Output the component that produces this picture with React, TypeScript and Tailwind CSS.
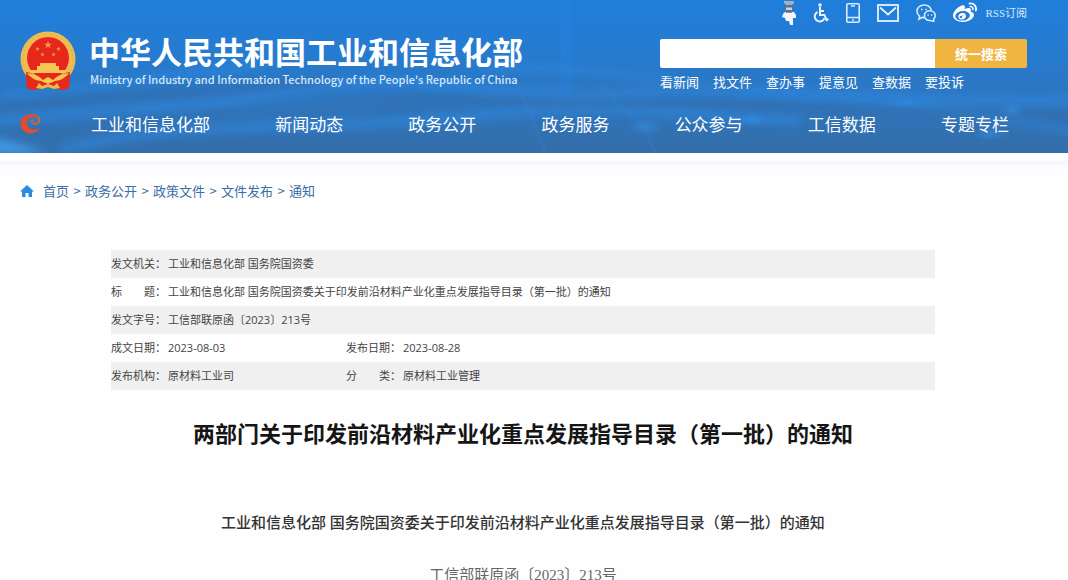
import React from 'react';
import { FaWeibo } from 'react-icons/fa';

const navItems = ['工业和信息化部', '新闻动态', '政务公开', '政务服务', '公众参与', '工信数据', '专题专栏'];
const quickLinks = ['看新闻', '找文件', '查办事', '提意见', '查数据', '要投诉'];
const crumbs = ['首页', '政务公开', '政策文件', '文件发布', '通知'];

const infoRows: string[][] = [
  ['发文机关：', '工业和信息化部 国务院国资委'],
  ['标　　题：', '工业和信息化部 国务院国资委关于印发前沿材料产业化重点发展指导目录（第一批）的通知'],
  ['发文字号：', '工信部联原函〔2023〕213号'],
  ['成文日期：', '2023-08-03', '发布日期：', '2023-08-28'],
  ['发布机构：', '原材料工业司', '分　　类：', '原材料工业管理'],
];

const HeaderBackdrop: React.FC = () => (
  <svg className="absolute inset-0 w-full h-full" viewBox="0 0 1068 153" preserveAspectRatio="none" aria-hidden="true">
    <defs>
      <linearGradient id="sky" x1="0" y1="0" x2="0" y2="1">
        <stop offset="0" stopColor="#1f7edb" />
        <stop offset="0.35" stopColor="#267bd0" />
        <stop offset="0.7" stopColor="#2f74bb" />
        <stop offset="1" stopColor="#346da9" />
      </linearGradient>
      <filter id="soft" x="-20%" y="-50%" width="140%" height="200%">
        <feGaussianBlur stdDeviation="4" />
      </filter>
      <radialGradient id="spark">
        <stop offset="0" stopColor="#2f8fe4" stopOpacity="0.6" />
        <stop offset="1" stopColor="#2f8fe4" stopOpacity="0" />
      </radialGradient>
    </defs>
    <rect width="1068" height="153" fill="url(#sky)" />
    <g filter="url(#soft)" fill="none" stroke="#2c8be4" strokeOpacity="0.6">
      <path d="M-10 122 C80 108 180 112 300 90 S480 100 620 92 S860 104 1078 100" strokeWidth="9" />
      <path d="M60 150 C180 118 330 132 470 116 S700 118 800 120" strokeWidth="9" />
      <path d="M480 70 C600 60 690 92 820 98 S1000 120 1078 132" strokeWidth="5" />
      <path d="M0 98 C90 84 180 78 270 62" strokeWidth="7" />
    </g>
    <g filter="url(#soft)" fill="none" stroke="#34679f" strokeOpacity="0.4">
      <path d="M-10 106 C110 98 200 92 330 82" strokeWidth="8" />
      <path d="M380 104 C480 94 560 108 640 104 S860 112 1078 114" strokeWidth="7" />
      <path d="M570 90 C620 84 680 84 740 88" strokeWidth="5" />
    </g>
    <path d="M520 92 L530 112 L545 153 M655 153 L645 127 L622 108 L600 84 M1010 110 L1030 96" stroke="#3389de" strokeOpacity="0.2" strokeWidth="4" fill="none" />
    <rect x="561" width="10" height="92" fill="#2c86e2" opacity="0.3" />
    <ellipse cx="645" cy="127" rx="18" ry="9" fill="url(#spark)" />
    <ellipse cx="752" cy="120" rx="16" ry="7" fill="url(#spark)" />
    <ellipse cx="1012" cy="110" rx="14" ry="8" fill="url(#spark)" />
    <ellipse cx="905" cy="103" rx="18" ry="5" fill="url(#spark)" />
    <ellipse cx="990" cy="134" rx="18" ry="7" fill="url(#spark)" />
    <path d="M-6 137 C14 142 32 146 48 154 L-6 154 Z" fill="#3c97e2" filter="url(#soft)" />
  </svg>
);

const star = 'M0 -4 L1 -1.2 L3.9 -1.2 L1.5 0.5 L2.4 3.3 L0 1.6 L-2.4 3.3 L-1.5 0.5 L-3.9 -1.2 L-1 -1.2 Z';

const Emblem: React.FC = () => (
  <svg className="w-14 h-[60px] shrink-0" viewBox="0 0 56 60" aria-hidden="true">
    <path d="M6 44 L50 44 L49 57 Q44 60 38 58 L28 56 L18 58 Q12 60 7 57 Z" fill="#e62a1c" />
    <circle cx="28" cy="28" r="27.5" fill="#efbc50" />
    <circle cx="28" cy="28" r="25" fill="none" stroke="#e5ad45" strokeWidth="1" strokeDasharray="3 2" />
    <circle cx="28" cy="27" r="21" fill="#e7261c" />
    <path d={star} transform="translate(28 14)" fill="#f0a63e" />
    <path d={star} transform="translate(17.5 18) scale(0.55)" fill="#f0a63e" />
    <path d={star} transform="translate(38.5 18) scale(0.55)" fill="#f0a63e" />
    <path d={star} transform="translate(22.5 23.5) scale(0.55)" fill="#f0a63e" />
    <path d={star} transform="translate(33.5 23.5) scale(0.55)" fill="#f0a63e" />
    <path d="M6 41 Q14 42 20 47 L28 44 L36 47 Q42 42 50 41 L49 57 Q44 60 38 58 L28 56 L18 58 Q12 60 7 57 Z" fill="#e62a1c" />
    <path d="M20 32 H36 V35 H39 V39 H47 L45 42 H11 L9 39 H17 V35 H20 Z" fill="#f6c552" />
    <path d="M7 42 Q17 43 23 49 L28 46 L33 49 Q39 43 49 42 Q44 49 35 50 L28 53 L21 50 Q12 49 7 42 Z" fill="#f6c552" />
    <path d="M16 57 L19 52 L22 55 L28 53 L34 55 L37 52 L40 57 L34 58 L28 56 L22 58 Z" fill="#f0b848" />
  </svg>
);

const PartyMark: React.FC = () => (
  <svg className="w-[22px] h-[22px] shrink-0" viewBox="0 0 22 22" aria-hidden="true">
    <path
      d="M18.500 3 Q13 -0.500 6.500 2 Q-0.500 6 0.500 12.500 Q2.500 20 10 20.500 Q15 20.500 19.500 16.500 L18 15.500 Q12 18 8.500 14.500 Q5.500 10.500 8 6.500 Q10.500 3 15 4.500 Z"
      fill="#e04c2c"
    />
    <path d="M17 3.500 Q20 6 18.500 9.500 Q16.500 11.500 12.500 10.500 M13.500 7 L11 9.500" fill="none" stroke="#d4603c" strokeWidth="2" />
  </svg>
);

const MascotIcon = () => (
  <svg className="w-[14px] h-6" viewBox="0 0 14 24" aria-hidden="true">
    <path d="M2 0 H12 V2 L10 4 H4 L2 2 Z" fill="#9fb3c6" />
    <path d="M3 4 H11 L12 9 L10 11 H4 L2 9 Z" fill="#557493" />
    <path d="M4 6.500 H10 V9 H4 Z" fill="#c7d6e4" />
    <path d="M3 11 H12 L14 14 V17 L11 17 L11 24 H8 L7 20 L4 20 L3 17 L0 16 L1 13 Z" fill="#f4f8fc" />
    <path d="M4 11.500 H10" stroke="#7d8e9d" strokeWidth="1" />
  </svg>
);

const WheelchairIcon = () => (
  <svg className="w-4 h-5" viewBox="0 0 16 20" fill="none" stroke="#e6f2ff" strokeWidth="2" aria-hidden="true">
    <circle cx="7" cy="2" r="1.800" fill="#e6f2ff" stroke="none" />
    <path d="M7 4 V12 H11.500 L13.500 17 L15.500 16 M7 8 H11" />
    <path d="M4.500 9 A5 5 0 1 0 11.500 15" />
  </svg>
);

const PhoneIcon = () => (
  <svg className="w-[14px] h-5" viewBox="0 0 14 20" fill="none" stroke="#d9ebff" strokeWidth="1.6" aria-hidden="true">
    <rect x="0.800" y="0.800" width="12.400" height="18.400" rx="1" />
    <path d="M1 14.500 H13 M5 3 H9" />
    <path d="M6 17 H8" />
  </svg>
);

const MailIcon = () => (
  <svg className="w-[22px] h-[18px]" viewBox="0 0 22 18" fill="none" stroke="#e6f2ff" strokeWidth="1.8" aria-hidden="true">
    <rect x="1" y="1" width="20" height="16" />
    <path d="M3 3.500 L11 10.500 L19 3.500" />
  </svg>
);

const WechatIcon = () => (
  <svg className="w-5 h-[18px]" viewBox="0 0 20 18" fill="none" stroke="#d9ebff" strokeWidth="1.6" aria-hidden="true">
    <path d="M15.500 6.500 C14.500 2.800 11.800 1 8.200 1 C4 1 1 3.600 1 7.200 C1 9.400 2 11 3.600 12.200 L3 15.200 L6.200 13.400 L8.500 13.700" />
    <path d="M13.800 6.700 C10.700 6.700 8.400 8.900 8.400 11.600 C8.400 14.400 10.700 16.500 13.800 16.500 L17.800 17.200 L17.600 15 C18.600 14.200 19.200 13 19.200 11.600 C19.200 8.900 16.900 6.700 13.800 6.700 Z" />
    <path d="M5 5.500 H6.500 M9.500 5.500 H11 M11.500 11 H12.800 M15 11 H16.300" />
  </svg>
);

const HomeIcon = () => (
  <svg className="w-[14px] h-3" viewBox="0 0 14 12" fill="#2b8be0" aria-hidden="true">
    <path d="M7 0 L14 6.500 H12 V12 H8.500 V8 H5.500 V12 H2 V6.500 H0 Z" />
  </svg>
);

const iconLinks = [
  { label: '智能问答', icon: <MascotIcon /> },
  { label: '无障碍', icon: <WheelchairIcon /> },
  { label: '移动版', icon: <PhoneIcon /> },
  { label: '邮箱', icon: <MailIcon /> },
  { label: '微信', icon: <WechatIcon /> },
];

const SiteHeader: React.FC = () => (
  <header className="relative text-white">
    <HeaderBackdrop />
    <div className="relative pl-5 pr-[41px]">
      <div className="flex justify-between">
        <a href="#" className="flex items-center gap-[13px] pt-[30px]">
          <Emblem />
          <div>
            <h1 className="text-[31px] leading-8 font-bold whitespace-nowrap">中华人民共和国工业和信息化部</h1>
            <p className="mt-1 pl-px text-[11px] leading-4 font-medium text-[#d5e7fa] whitespace-nowrap">
              Ministry of Industry and Information Technology of the People's Republic of China
            </p>
          </div>
        </a>

        <div className="w-[367px]">
          <div className="flex items-center justify-end gap-[17px] h-[26px]">
            {iconLinks.map(item => (
              <a key={item.label} href="#" aria-label={item.label}>{item.icon}</a>
            ))}
            <div className="flex items-center gap-2">
              <a href="#" aria-label="微博"><FaWeibo size={24} /></a>
              <a href="#" className="font-['Liberation_Serif','Noto_Sans_CJK_SC',serif] text-[11px] text-[#d9ebff]">RSS订阅</a>
            </div>
          </div>
          <form className="flex mt-[13px]">
            <input type="text" aria-label="搜索" className="flex-1 min-w-0 h-[29px] px-2 bg-white rounded-l-xs text-sm text-slate-800 outline-none" />
            <button type="button" className="w-[92px] h-[29px] bg-[#f0b441] rounded-r-xs text-[13px] font-bold">统一搜索</button>
          </form>
          <div className="flex gap-[14px] mt-1 text-[13px] leading-5">
            {quickLinks.map(link => (
              <a key={link} href="#">{link}</a>
            ))}
          </div>
        </div>
      </div>

      <nav className="flex items-center pt-5 pb-[17px]">
        <PartyMark />
        <div className="flex-1 flex justify-between pl-[49px] pr-[18px] text-[17px] leading-6">
          {navItems.map(item => (
            <a key={item} href="#">{item}</a>
          ))}
        </div>
      </nav>
    </div>
  </header>
);

const App: React.FC = () => (
  <div className="min-h-screen bg-[#fefefe] font-['Noto_Sans_CJK_SC',sans-serif]">
    <SiteHeader />
    <div className="h-4 bg-linear-to-b from-white from-40% via-[#f2f6fa] via-55% to-[#fefefe]" />

    <nav className="flex items-center px-5 pt-3 text-[13px] leading-5 text-[#3a6ea5]">
      <HomeIcon />
      <ol className="flex ml-[9px]">
        {crumbs.map((crumb, i) => (
          <li key={crumb} className="flex">
            {i > 0 && <span className="w-4 text-center">&gt;</span>}
            <a href="#">{crumb}</a>
          </li>
        ))}
      </ol>
    </nav>

    <main className="pl-[111px] pr-[133px] pt-[49px]">
      <table className="w-full table-fixed font-['Open_Sans','Noto_Sans_CJK_SC',sans-serif] text-[11px] leading-4 text-[#444444]">
        <colgroup>
          <col className="w-[57px]" />
          <col className="w-[178px]" />
          <col className="w-[57px]" />
          <col />
        </colgroup>
        <tbody>
          {infoRows.map(row => (
            <tr key={row[0]} className="h-7 odd:bg-[#f0f0f0]">
              {row.map((cell, i) =>
                i % 2 === 0 ? (
                  <th key={i} scope="row" className="p-0 text-left font-normal whitespace-nowrap">{cell}</th>
                ) : (
                  <td key={i} colSpan={row.length === 2 ? 3 : 1} className="p-0">{cell}</td>
                )
              )}
            </tr>
          ))}
        </tbody>
      </table>

      <h2 className="mt-[26px] text-[22px] leading-8 font-bold text-center text-[#151515] whitespace-nowrap">
        两部门关于印发前沿材料产业化重点发展指导目录（第一批）的通知
      </h2>

      <div className="font-['Liberation_Serif','Noto_Sans_CJK_SC',serif] text-[15px] leading-6 text-center whitespace-nowrap">
        <p className="mt-[63px] font-medium text-[#333333]">
          工业和信息化部 国务院国资委关于印发前沿材料产业化重点发展指导目录（第一批）的通知
        </p>
        <p className="mt-7 text-[#666666]">工信部联原函〔2023〕213号</p>
      </div>
    </main>
  </div>
);

export default App;
